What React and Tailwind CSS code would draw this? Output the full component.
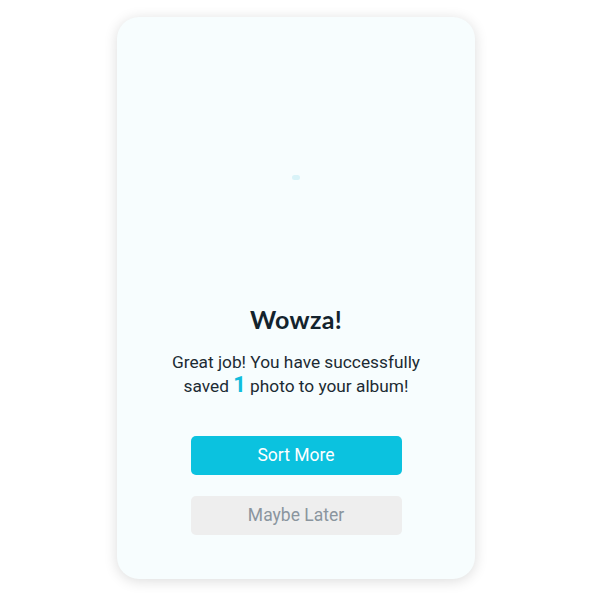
export default function App() {
  return (
    <div className="w-[600px] h-[600px] bg-white flex pl-[117px] pt-[17px]">
      <div
        className="w-[358px] h-[562px] rounded-[22px] bg-[#f7fdfe] shadow-[0_2px_14px_rgba(0,0,0,0.14)] flex flex-col items-center"
        style={{ fontFamily: "Roboto, 'Noto Sans', sans-serif" }}
      >
        <div className="h-[286px] w-full relative">
          <span className="absolute left-[175px] top-[158px] w-[8px] h-[5px] rounded-full bg-[#d9f3f8]" />
        </div>
        <h1
          className="text-[25px] font-bold text-[#13232d] leading-[32px] tracking-[0.3px]"
          style={{ fontFamily: "Lato, 'Open Sans', sans-serif" }}
        >
          Wowza!
        </h1>
        <p className="mt-[15px] text-[17.3px] leading-[24px] text-[#1c2b33] text-center">
          Great job! You have successfully
          <br />
          saved <span className="text-[22px] leading-none font-bold text-[#11bcdc]">1</span> photo to your album!
        </p>
        <button className="mt-[38px] w-[211px] h-[39px] rounded-[5px] bg-[#0bc2df] text-white text-[17.5px]">
          Sort More
        </button>
        <button className="mt-[21px] w-[211px] h-[39px] rounded-[5px] bg-[#eeeeee] text-[#8a959e] text-[17.5px]">
          Maybe Later
        </button>
      </div>
    </div>
  );
}
